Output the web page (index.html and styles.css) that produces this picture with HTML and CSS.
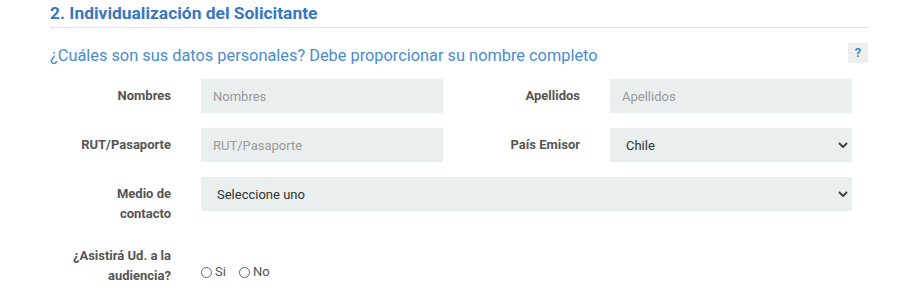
FILE: index.html
```html
<!DOCTYPE html>
<html>
	<head>
		<meta charset="utf-8" />
		<title>Individualización del Solicitante</title>
		<link rel="stylesheet" href="styles.css">
	</head>
	<body>
		<div class="section">
			<h2 class="section-title">2. Individualización del Solicitante</h2>
			<div class="question">
				<p>¿Cuáles son sus datos personales? Debe proporcionar su nombre completo</p>
				<span class="help">?</span>
			</div>
			<form class="form-grid">
				<label class="field-label" for="nombres">Nombres</label>
				<input class="field" id="nombres" type="text" placeholder="Nombres">
				<label class="field-label" for="apellidos">Apellidos</label>
				<input class="field" id="apellidos" type="text" placeholder="Apellidos">

				<label class="field-label" for="rut">RUT/Pasaporte</label>
				<input class="field" id="rut" type="text" placeholder="RUT/Pasaporte">
				<label class="field-label" for="pais">País Emisor</label>
				<select class="field select" id="pais">
					<option>Chile</option>
				</select>

				<label class="field-label" for="medio">Medio de contacto</label>
				<select class="field select wide" id="medio">
					<option>Seleccione uno</option>
				</select>

				<label class="field-label">¿Asistirá Ud. a la audiencia?</label>
				<div class="radios">
					<label class="radio"><input type="radio" name="asiste"><span>Si</span></label>
					<label class="radio"><input type="radio" name="asiste"><span>No</span></label>
				</div>
			</form>
		</div>
	</body>
</html>
```

FILE: styles.css
```css
* {
	margin: 0;
	padding: 0;
	box-sizing: border-box;
}
body {
	background-color: #ffffff;
	font-family: Roboto, "Liberation Sans", sans-serif;
	color: #333;
}
.section {
	width: 818px;
	margin-left: 50px;
}
.section-title {
	font-size: 17.4px;
	font-weight: bold;
	color: #3677bf;
	line-height: 22px;
	padding-top: 2px;
	padding-bottom: 3px;
	border-bottom: 1px solid #e2e2e2;
}
.question {
	display: flex;
	justify-content: space-between;
	align-items: flex-start;
	margin-top: 15px;
}
.question p {
	font-size: 16.35px;
	line-height: 20px;
	color: #4a8ccf;
	padding-top: 3px;
}
.help {
	width: 20px;
	height: 20px;
	line-height: 19px;
	text-align: center;
	font-size: 13px;
	font-weight: bold;
	color: #3d8ad6;
	background-color: #eeeeee;
}
.form-grid {
	display: grid;
	grid-template-columns: 107px 242px 107px 242px;
	column-gap: 30px;
	row-gap: 15px;
	margin-top: 13px;
	margin-left: 14px;
}
.field-label {
	text-align: right;
	font-size: 13px;
	font-weight: bold;
	line-height: 20px;
	padding-top: 7px;
	color: #555;
}
.field {
	height: 34px;
	border: none;
	outline: none;
	background-color: #e9eeef;
	padding: 0 12px;
	font-family: inherit;
	font-size: 13px;
	color: #333;
}
.field::placeholder {
	color: #9a9a9a;
}
.select {
	appearance: none;
	-webkit-appearance: none;
	padding: 0 16px;
	background-image: url("data:image/svg+xml;utf8,<svg xmlns='http://www.w3.org/2000/svg' width='10' height='6' viewBox='0 0 10 6'><path d='M1 1l4 4 4-4' fill='none' stroke='%23444' stroke-width='2'/></svg>");
	background-repeat: no-repeat;
	background-position: right 4px center;
}
.wide {
	grid-column: 2 / 5;
}
.radios {
	display: flex;
	gap: 13px;
	padding-top: 19px;
	font-size: 13px;
	line-height: 20px;
	color: #555;
}
.radio {
	display: flex;
	align-items: center;
	gap: 3px;
}
.radio input {
	appearance: none;
	-webkit-appearance: none;
	width: 11px;
	height: 11px;
	border: 1px solid #666;
	border-radius: 50%;
}
```
